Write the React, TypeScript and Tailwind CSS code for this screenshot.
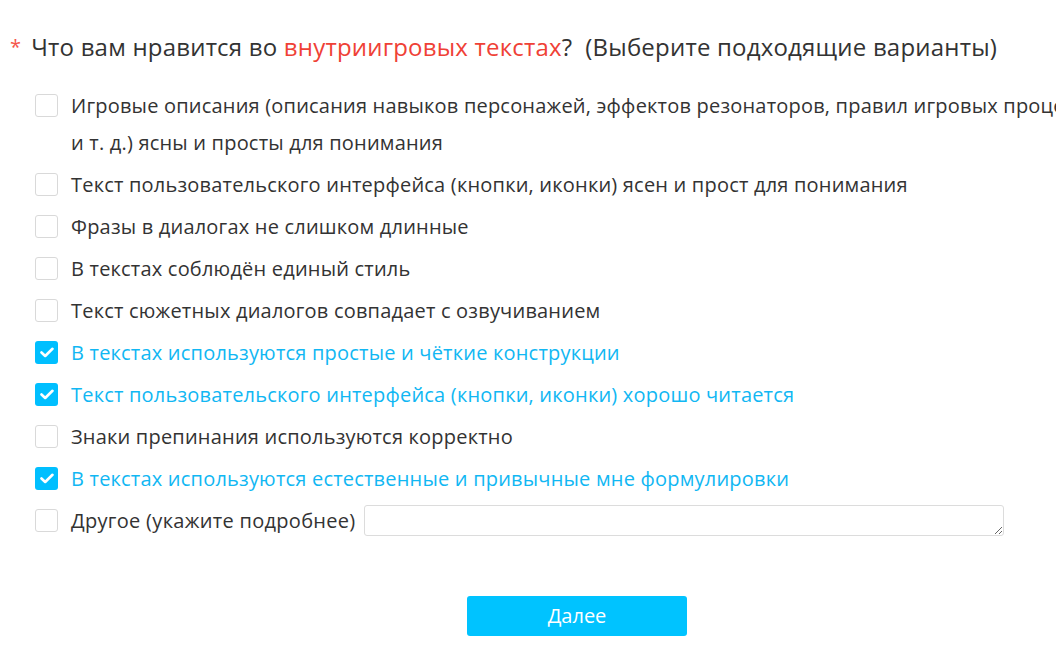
import { useState } from "react";

const options = [
  {
    label:
      "Игровые описания (описания навыков персонажей, эффектов резонаторов, правил игровых процессов и т. д.) ясны и просты для понимания",
    checked: false,
  },
  { label: "Текст пользовательского интерфейса (кнопки, иконки) ясен и прост для понимания", checked: false },
  { label: "Фразы в диалогах не слишком длинные", checked: false },
  { label: "В текстах соблюдён единый стиль", checked: false },
  { label: "Текст сюжетных диалогов совпадает с озвучиванием", checked: false },
  { label: "В текстах используются простые и чёткие конструкции", checked: true },
  { label: "Текст пользовательского интерфейса (кнопки, иконки) хорошо читается", checked: true },
  { label: "Знаки препинания используются корректно", checked: false },
  { label: "В текстах используются естественные и привычные мне формулировки", checked: true },
];

function Box({ checked }: { checked: boolean }) {
  if (checked) {
    return (
      <span className="mt-[7px] flex h-[23px] w-[23px] shrink-0 items-center justify-center rounded-[3px] bg-[#00bfff]">
        <svg width="14" height="11" viewBox="0 0 14 11" fill="none">
          <path d="M1.5 5.5 L5.2 9 L12.5 1.8" stroke="white" strokeWidth="2.6" strokeLinecap="round" strokeLinejoin="round" />
        </svg>
      </span>
    );
  }
  return <span className="mt-[7px] block h-[23px] w-[23px] shrink-0 rounded-[3px] border border-[#d9d9d9] bg-white" />;
}

export default function App() {
  const [items, setItems] = useState(options);
  const [other, setOther] = useState(false);

  const toggle = (i: number) =>
    setItems(items.map((it, j) => (j === i ? { ...it, checked: !it.checked } : it)));

  return (
    <div className="h-[661px] w-[1056px] overflow-hidden bg-white" style={{ fontFamily: '"Open Sans", "Noto Sans", sans-serif' }}>
      <div className="w-[1144px] pl-[10px] pt-[31px]">
        <div className="flex items-center text-[24px] leading-[32px] tracking-[0.2px] text-[#333]">
          <span className="mr-[10px] text-[20px] text-[#f5564a]">*</span>
          <span>
            Что вам нравится во <span className="text-[#ef4136]">внутриигровых текстах</span>?&nbsp; (Выберите подходящие варианты)
          </span>
        </div>

        <ul className="mt-[24px] flex flex-col gap-[5px] pl-[25px]">
          {items.map((it, i) => (
            <li key={i} className="flex cursor-pointer gap-[13px]" onClick={() => toggle(i)}>
              <Box checked={it.checked} />
              <span
                className={`max-w-[1045px] text-[20px] leading-[37px] tracking-[0.2px] ${it.checked ? "text-[#11b7f3]" : "text-[#333]"}`}
              >
                {it.label}
              </span>
            </li>
          ))}
          <li className="flex items-start gap-[13px]">
            <span onClick={() => setOther(!other)} className="flex cursor-pointer">
              <Box checked={other} />
            </span>
            <span className="text-[20px] leading-[37px] tracking-[0.3px] text-[#333]">Другое (укажите подробнее)</span>
            <textarea className="ml-[-5px] mt-[3px] h-[31px] w-[640px] resize-y rounded-[3px] border border-[#dcdcdc] px-2 text-[14px] outline-none" />
          </li>
        </ul>

        <div className="mt-[57px] flex justify-center">
          <button className="h-[40px] w-[220px] rounded-[3px] bg-[#00c3ff] text-[20px] text-white">Далее</button>
        </div>
      </div>
    </div>
  );
}
